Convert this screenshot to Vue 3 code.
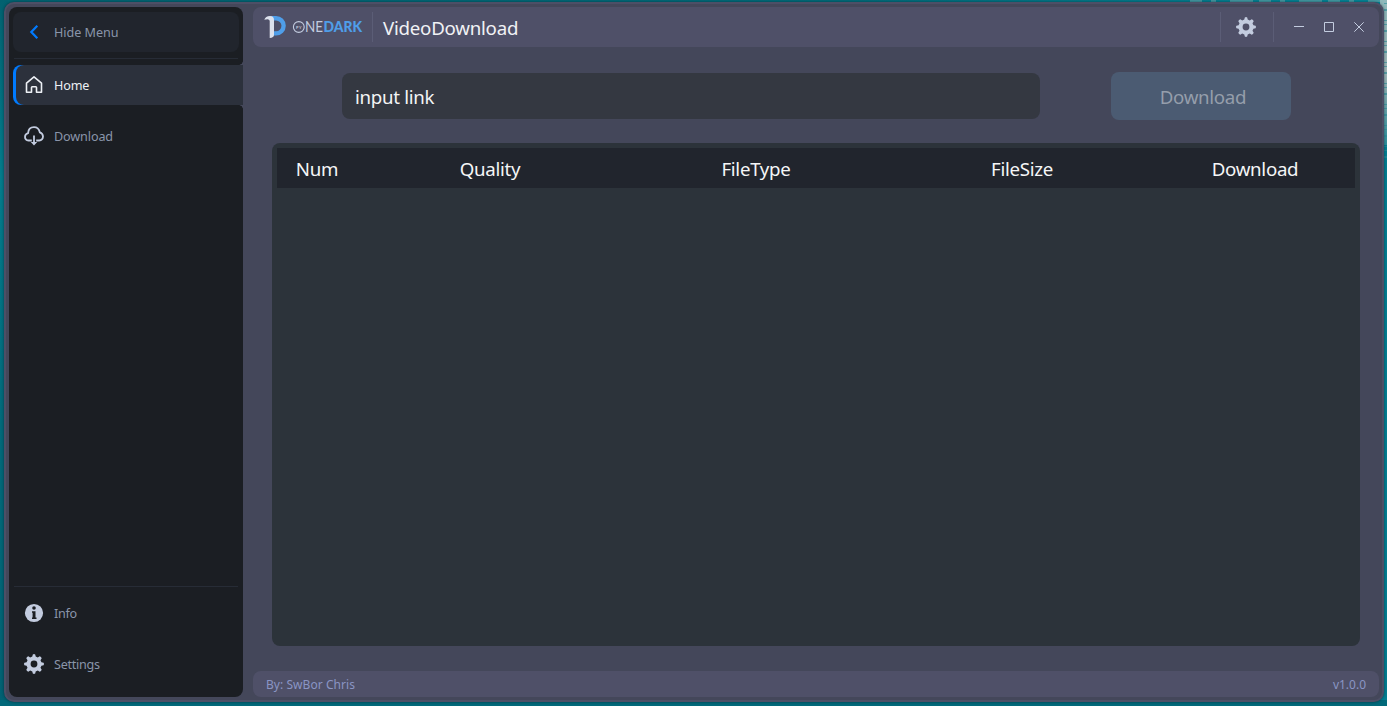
<script setup>
const columns = [
  { key: 'num', label: 'Num' },
  { key: 'quality', label: 'Quality' },
  { key: 'type', label: 'FileType' },
  { key: 'size', label: 'FileSize' },
  { key: 'action', label: 'Download' },
]
const gear = 'M8.3 2.6 8.8.4 Q10 -.3 11.2.4 L11.7 2.6 13.8 3.5 15.7 2.3 Q17.2 2.8 17.7 4.3 L16.5 6.2 17.4 8.3 19.6 8.8 Q20.3 10 19.6 11.2 L17.4 11.7 16.5 13.8 17.7 15.7 Q17.2 17.2 15.7 17.7 L13.8 16.5 11.7 17.4 11.2 19.6 Q10 20.3 8.8 19.6 L8.3 17.4 6.2 16.5 4.3 17.7 Q2.8 17.2 2.3 15.7 L3.5 13.8 2.6 11.7 .4 11.2 Q-.3 10 .4 8.8 L2.6 8.3 3.5 6.2 2.3 4.3 Q2.8 2.8 4.3 2.3 L6.2 3.5Z M10 6.6a3.4 3.4 0 1 0 0 6.8a3.4 3.4 0 0 0 0-6.8Z'
</script>

<template>
  <div class="desktop">
    <svg class="surf" viewBox="0 0 1387 706" preserveAspectRatio="none">
      <defs>
        <linearGradient id="sea" x1="0" x2="1" y1="0" y2="0">
          <stop offset="0" stop-color="#026472" />
          <stop offset=".6" stop-color="#026b79" />
          <stop offset="1" stop-color="#05889a" />
        </linearGradient>
        <linearGradient id="side" x1="0" x2="0" y1="0" y2="1">
          <stop offset="0" stop-color="#026170" />
          <stop offset=".25" stop-color="#037b8c" />
          <stop offset=".6" stop-color="#02697a" />
          <stop offset="1" stop-color="#026072" />
        </linearGradient>
        <linearGradient id="foam" x1="0" x2="0" y1="0" y2="1">
          <stop offset="0" stop-color="#8fb9bb" />
          <stop offset=".5" stop-color="#a3b9b9" />
          <stop offset="1" stop-color="#2f8f9c" />
        </linearGradient>
      </defs>
      <rect width="1387" height="706" fill="url(#sea)" />
      <rect width="8" height="706" fill="url(#side)" />
      <rect x="1380" y="140" width="7" height="566" fill="#047f92" />
      <rect x="1380" width="7" height="145" fill="url(#foam)" />
      <rect y="700" width="1387" height="6" fill="#02697a" />
      <path d="M1385.5 3V165" stroke="#2b8f9b" stroke-width="3" stroke-dasharray="1 5 2 9 1 3" opacity=".6" />
      <path d="M1190 1H1380" stroke="#6fa9ac" stroke-width="2" stroke-dasharray="12 9 5 14 23 6" opacity=".6" />
    </svg>
    <div class="window">
      <aside class="sidebar">
        <div class="item toggle">
          <svg class="ico" viewBox="0 0 20 20"><path d="M13.3 3.8 7.3 10l6 6.2" fill="none" stroke="#007bff" stroke-width="2.2" /></svg>
          <span>Hide Menu</span>
        </div>
        <hr />
        <div class="active-wrap">
          <div class="item active">
            <svg class="ico" viewBox="0 0 20 20"><path d="M2.5 17.2V8.2L10 1.8l7.5 6.4v9h-5v-4.8q0-.7-.7-.7H8.2q-.7 0-.7.7v4.8Z" fill="none" stroke="#edf0f5" stroke-width="1.6" stroke-linejoin="round" /></svg>
            <span>Home</span>
          </div>
        </div>
        <div class="item download">
          <svg class="ico" viewBox="0 0 20 20"><path d="M7.8 14.5H4.6Q1 14 1 10.9 1 8 4.1 7.2 4.4 1.2 10 1.2 14.6 1.2 15.8 6.3 19 7.5 19 10.6 18.7 14.2 15.2 14.5H12.2" fill="none" stroke="#c3ccdf" stroke-width="1.8" stroke-linejoin="round" /><path d="M9.1 9.4h1.8v6.6h2.3L10 19.6 6.8 16h2.3Z" fill="#c3ccdf" /></svg>
          <span>Download</span>
        </div>
        <div class="bottom">
          <hr />
          <div class="item info">
            <svg class="ico" viewBox="0 0 20 20"><circle cx="10" cy="10" r="9.1" fill="#c3ccdf" /><circle cx="10" cy="5" r="1.8" fill="#1b1e23" /><path d="M8 8.2h3.5v6.3h1v1.6H8v-1.6h.6V9.8H8Z" fill="#1b1e23" /></svg>
            <span>Info</span>
          </div>
          <div class="item settings">
            <svg class="ico" viewBox="0 0 20 20"><path :d="gear" fill="#c3ccdf" fill-rule="evenodd" /></svg>
            <span>Settings</span>
          </div>
        </div>
      </aside>

      <main class="main">
        <header class="titlebar">
          <svg class="logo" width="100" height="24" viewBox="0 0 100 24">
            <path d="M7 1h5a9.7 9.7 0 0 1 0 19.6H8.5v-4.3H12a5.4 5.4 0 0 0 0-10.9H9Z" fill="#4f9ee9" />
            <path d="M.3 4.8Q1.4 1 6 1 10 1 10 5v15Q10 22.6 5.7 23V5.8Q5 4.3 3.7 4.3Q2 4.3.3 4.8Z" fill="#dce1ec" />
            <circle cx="34.8" cy="12" r="5.4" fill="none" stroke="#c3ccdf" stroke-width="1.1" />
            <text x="32.1" y="13.6" class="py" textLength="5.4">PY</text>
            <text x="41" y="17.3" class="one" textLength="18" lengthAdjust="spacingAndGlyphs">NE</text>
            <text x="59.5" y="17.3" class="dark" textLength="38.5" lengthAdjust="spacingAndGlyphs">DARK</text>
          </svg>
          <i class="sep"></i>
          <h1>VideoDownload</h1>
          <i class="sep push"></i>
          <svg class="gear" viewBox="0 0 20 20"><path :d="gear" fill="#c3ccdf" fill-rule="evenodd" /></svg>
          <i class="sep"></i>
          <div class="controls">
            <svg viewBox="0 0 10 10"><path d="M0 4.5h10" /></svg>
            <svg viewBox="0 0 10 10"><path d="M.5.5h9v9h-9Z" /></svg>
            <svg viewBox="0 0 10 10"><path d="m.3.3 9.4 9.4M9.7.3.3 9.7" /></svg>
          </div>
        </header>

        <section class="query">
          <div class="field"><span>input link</span></div>
          <div class="btn"><span>Download</span></div>
        </section>

        <section class="table">
          <div class="thead">
            <div v-for="c in columns" :key="c.key"><span>{{ c.label }}</span></div>
          </div>
        </section>

        <footer class="credits"><span class="by">By: SwBor Chris</span><span>v1.0.0</span></footer>
      </main>
    </div>
  </div>
</template>

<style>
html, body { margin: 0; overflow: hidden; }
</style>

<style scoped>
* { box-sizing: border-box; }
.desktop { width: 1387px; height: 706px; padding: 2px 3px 4px 4px; position: relative; font-family: "Noto Sans", "Open Sans", sans-serif; }
.surf { position: absolute; inset: 0; width: 100%; height: 100%; }
.window { position: relative; width: 1380px; height: 700px; border: 2px solid #4d4f66; border-radius: 10px; background: #44475a; padding: 3px; display: flex; gap: 10px; box-shadow: 0 0 3px rgba(0, 20, 30, .55); }
.sidebar { width: 234px; height: 690px; background: #1b1e23; border-radius: 8px; padding: 5px 0 0 4px; display: flex; flex-direction: column; }
.item { height: 40px; flex: none; display: flex; align-items: center; padding-left: 11px; color: #8a95aa; font-size: 12.6px; letter-spacing: -.12px; white-space: nowrap; }
.ico { width: 20px; height: 20px; margin-right: 10px; flex: none; }
.toggle { width: 226px; background: #21252d; border-radius: 8px; letter-spacing: -.03px; }
hr { width: 224px; height: 1px; border: 0; background: #272c36; margin: 6px 0 6px 1px; flex: none; }
.active-wrap { background: #007bff; border-radius: 8px 0 0 8px; position: relative; padding-left: 3px; }
.active-wrap::before, .active-wrap::after { content: ""; position: absolute; right: 0; width: 4px; height: 4px; }
.active-wrap::before { top: -4px; background: radial-gradient(circle at 0 0, transparent 3.5px, #44475a 4px); }
.active-wrap::after { bottom: -4px; background: radial-gradient(circle at 0 100%, transparent 3.5px, #44475a 4px); }
.active { background: #2c313c; color: #edf0f5; padding-left: 8px; border-radius: 8px 0 0 8px; }
.download { margin-top: 11px; }
.bottom { margin-top: auto; padding-bottom: 13px; }
.info, .settings { letter-spacing: -.28px; }
.settings { margin-top: 11px; }
.main { width: 1126px; display: flex; flex-direction: column; }
.titlebar { height: 40px; flex: none; background: #4f5068; border-radius: 8px; display: flex; align-items: center; padding-left: 11px; }
.logo { display: block; }
.py { font: 700 4px "Lato", sans-serif; fill: #c3ccdf; }
.one { font: 400 15px "Lato", sans-serif; fill: #c3ccdf; }
.dark { font: 900 15px "Lato", sans-serif; fill: #4f9ee9; }
.sep { width: 1px; height: 30px; background: #5b5d76; margin-left: 8px; }
h1 { margin: 0 0 0 10px; font-size: 18.7px; font-weight: 400; color: #f1f2f5; letter-spacing: -.24px; }
.sep.push { margin-left: auto; }
.gear { width: 20px; height: 20px; margin: 0 9px 0 15px; }
.controls { display: flex; gap: 20px; margin: 0 15px 0 20px; }
.controls svg { width: 10px; height: 10px; fill: none; stroke: #c3ccdf; stroke-width: 1; }
.query { display: flex; align-items: center; height: 48px; margin: 25px 0 0 89px; gap: 71px; font-size: 18.7px; letter-spacing: -.3px; }
.field { width: 698px; height: 46px; background: #343841; border-radius: 8px; padding-left: 13px; display: flex; align-items: center; color: #f3f4f5; }
.btn { width: 180px; height: 48px; background: #4b5b72; border-radius: 8px; display: flex; align-items: center; justify-content: center; color: #959eab; padding-left: 4px; }
.table { margin: 23px 0 0 19px; width: 1088px; height: 503px; background: #2c333a; border-radius: 8px; padding: 5px; }
.thead { height: 40px; background: #21252d; display: grid; grid-template-columns: 80px 266px 266px 266px 200px; align-items: center; color: #f5f6f7; font-size: 18.7px; letter-spacing: -.28px; text-align: center; }
.thead span { display: inline-block; padding-top: 1px; }
.credits { margin-top: 25px; height: 26px; background: #4f5068; border-radius: 8px; padding: 1px 13px 0; display: flex; align-items: center; justify-content: space-between; font-size: 12px; color: #8a95c4; }
.by { letter-spacing: .05px; }
</style>
